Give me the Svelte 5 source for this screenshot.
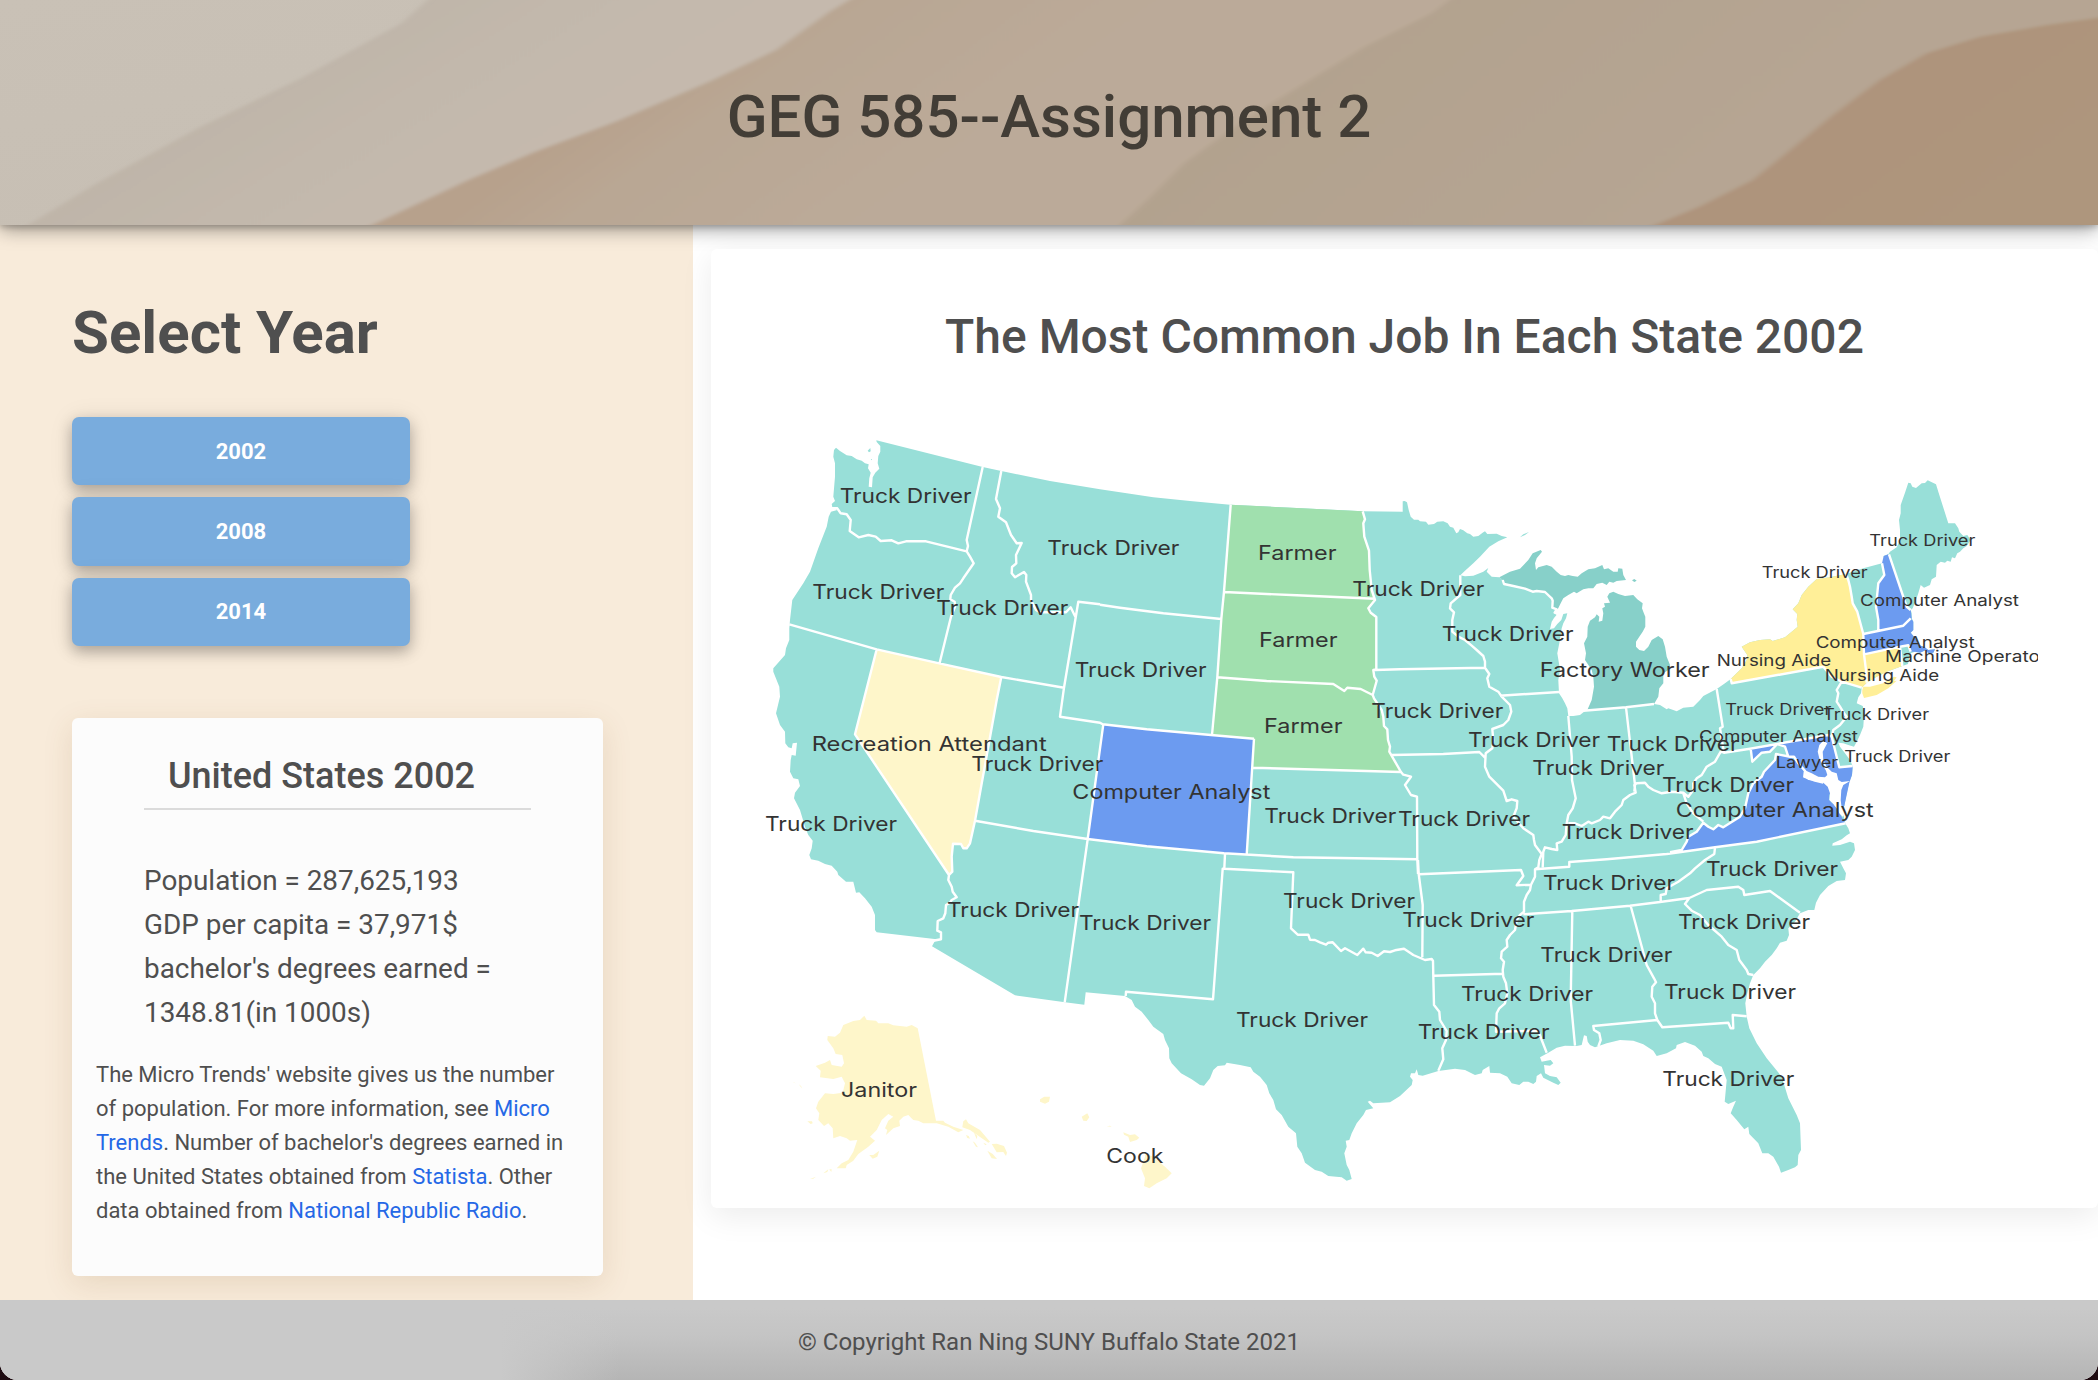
<script>
  // Map geometry is stored per survey sheet: every sheet has an origin on the
  // map and holds points at three units per map pixel.
  const sheets = {
    A: [750, 420], B: [750, 700], C: [1080, 480], D: [1080, 840],
    E: [1350, 480], F: [1670, 460], G: [1400, 780], H: [1690, 600],
  };

  function point(sheet, pair) {
    const [x, y] = pair.split(',').map(Number);
    const [ox, oy] = sheets[sheet];
    return `${(ox + x / 3).toFixed(1)} ${(oy + y / 3).toFixed(1)}`;
  }

  // "A 1,2 3,4 C 5,6" -> SVG path; a letter switches the sheet, "/" lifts the pen.
  function trace(text, closed = false) {
    let sheet = 'A';
    let out = '';
    let pen = 'M';
    for (const token of text.trim().split(/\s+/)) {
      if (token === '/') {
        out += closed ? 'Z' : '';
        pen = 'M';
      } else if (sheets[token]) {
        sheet = token;
      } else {
        out += pen + point(sheet, token);
        pen = 'L';
      }
    }
    return out + (closed ? 'Z' : '');
  }

  const mainland = trace(`A 258,83 270,93 290,106 305,108 320,118 335,122 345,130 356,133 354,145 362,158 358,175 356,200 366,202 368,172 376,158 388,146 383,130 385,108 391,95 391,78 380,66 379,61 698,141 754,153 900,183 1050,208
    C 140,40 220,52 330,63 450,74 650,84 848,94
    E 158,95 158,64 164,63 171,67 176,90 182,110 192,119 205,119 210,124 228,125 235,134 252,132 262,125 280,124 293,130 300,140 310,143 319,160 325,157 330,147 340,151 352,160 360,162 370,170 385,168 400,157 405,154 412,162 440,161 455,168 472,172 445,184 418,200 390,230 370,250 345,272 331,286 345,289 370,287 400,275 415,264 410,275 425,290 448,292 458,300 462,312 490,318 525,326 548,335 560,333 585,336 605,355 608,362 607,383 618,388 614,398 620,404 612,414 605,425 600,447 612,445 622,432 634,420 640,402 652,400 648,415 640,430 635,445 632,465 628,490 622,520 626,545 630,570 625,600 627,640 637,655 645,670 652,685 655,708 670,708 690,705 705,693 720,690 828,682 912,672 930,675 950,688 955,685 980,694 1000,683 1030,680 1050,660
    F 100,708 140,687 165,670 182,657 215,625 230,600 232,585 215,560 240,547 270,540 300,538 308,543 345,532 365,515 383,500 380,480 382,462 368,448 385,430 395,405 415,380 440,357 480,352 528,342 580,325 636,310 643,305 641,288 655,283 660,275 680,262 690,240 690,210 687,180 692,160 692,135 705,98 715,68 722,70 727,80 738,84 755,70 765,69 773,61 798,73 805,95 835,190 855,190 865,205 868,215 880,228 892,225 902,240 890,258 880,265 870,275 862,280 855,295 846,292 842,305 832,302 825,308 812,305 800,315 798,350 785,358 780,375 762,383 752,375 745,400 738,420 728,445 722,450 725,460 725,475 730,485 730,510 722,518 740,540 745,555 762,560 775,570 795,568 790,578 775,580 768,570 750,578 735,575 722,580 718,590 714,612 697,618 650,635 620,650 590,668 575,683 573,700 565,712 560,730 578,738 583,755 580,800 570,825 560,845 552,860 535,855 520,850 505,848 510,860 525,880 540,900 548,918 546,945
    H 478,545 470,580 463,618 455,625 467,672
    G 1345,145 1350,160 1340,166 1325,178 1298,190 1297,197 1320,195 1350,185 1362,190 1365,210 1355,230 1345,240 1320,245 1330,265 1338,280 1335,300 1310,303 1285,318 1260,345 1248,368 1243,390 1225,390 1200,400 1185,425 1165,445 1167,465 1160,482 1140,488 1130,505 1115,525 1095,545 1080,565 1060,585 1050,610 1042,640 1036,670 1040,710 1048,745 1070,790 1100,835 1145,890 1165,955 1190,1005 1200,1030 1203,1110 1195,1125 1193,1155 1185,1162 1165,1170 1143,1178 1137,1160 1120,1130 1105,1120 1087,1120 1075,1090 1048,1062 1045,1040 1033,1048 1010,1020 992,1000 1000,980 1008,962 985,972 974,965 980,900 965,860 945,852 925,835 910,828 905,815 885,797 855,786 830,795 828,805 800,820 770,828 760,812 730,793 700,782 660,780 620,790 585,802 570,795 563,785 560,768 552,766 545,795 530,798 495,797 470,803 445,818 420,832 425,845 440,842 452,840 460,850 450,857 432,855 435,880 450,888 470,892 482,908 475,915 460,908 430,893 423,880 410,888 408,905 400,912 385,905 370,905 358,915 335,910 322,890 300,880 270,878 268,858 248,870 245,880 225,885 195,870 165,866 115,873 68,887 55,885 50,868 45,880 33,880 30,890 38,900 35,915 0,948
    D 930,787 880,790 870,782 863,785 880,805 858,810 850,825 830,850 815,880 808,900 797,902 800,920 793,940 800,975 808,990 815,1017 800,1022 785,1012 745,1008 725,995 705,990 675,968 665,940 652,920 648,880 625,860 605,825 588,808 580,780 568,760 560,735 540,710 520,695 512,682 480,675 440,668 435,676 413,678 400,690 390,715 372,737 360,735 335,718 303,700 275,670 268,655 267,625 255,600 250,582 220,560 205,540 185,515 165,500 155,480 135,468 17,457 13,494
    B 945,907 795,886 546,739 555,722 560,718 380,697 375,690 375,645 365,620 345,595 328,577 318,578 310,545 288,545 265,525 262,515 245,497 225,492 205,482 183,478 178,465 185,445 188,422 175,405 165,380 150,330 132,295 135,278 150,258 145,238 130,235 120,215 122,180 125,165 137,167 141,128 128,130 125,145 115,142 106,130 105,95 90,75 78,40 80,0
    A 78,880 90,830 88,800 70,755 70,745 105,705 108,685 118,660 118,625 120,600 127,540 160,490 180,455 205,385 230,320 236,290 243,275 262,270 247,262 245,252 255,243 250,230 255,170 255,130 250,110 252,90`, true);

  const virginia = `-60,757 -25,750 -10,725 -5,710 20,695 40,668 55,680 70,688 85,675 100,682 150,650 165,625 175,580 190,550 215,530 222,515 255,480 258,462 300,470 325,490 345,520 400,548 418,580 418,600 440,625 467,672 300,705 200,725 75,742`;
  const maryland = `182,446 415,405 428,418 448,502 488,498 486,525 478,548 463,618 430,615 418,580 400,548 343,530 345,512 325,490 312,470 295,470 285,440 262,432 240,455 215,458 187,485`;

  const regions = [
    ['michigan', `E 448,292 480,275 510,266 535,240 548,220 572,210 576,215 560,235 555,250 558,270 565,262 590,255 605,260 620,275 632,285 645,288 655,285 668,288 683,290 695,280 715,268 735,265 757,255 762,268 775,265 790,275 803,275 805,265 817,266 820,285 828,300 800,303 790,308 778,305 770,315 757,308 740,312 730,325 715,325 700,328 680,340 672,335 655,345 640,355 632,370 623,388 607,383 608,362 605,355 585,336 560,333 548,335 525,326 490,318 462,312 458,300 /
      712,690 725,660 732,620 730,590 725,570 705,540 708,520 702,490 712,470 713,440 720,422 735,412 740,403 748,410 746,425 757,422 760,400 757,385 765,380 762,370 780,368 772,350 778,340 790,335 805,342 825,348 850,345 862,358 878,370 876,385 880,395 886,410 886,440 878,455 868,470 858,485 858,500 868,510 882,513 895,500 905,480 925,468 938,478 945,500 950,530 960,555 955,570 940,580 940,610 928,625 925,650 912,672 835,684 / 846,301 853,297 860,302 853,306`],
    ['farmer', `C 452,74 650,84 848,94 855,118 850,130 853,170 867,212 869,270 875,330 885,360 865,385 872,398 889,411 889,568 880,570 883,590 890,602 878,645 882,655 905,690 910,710 912,738 922,748 924,780 930,800 928,815 963,876 520,863 522,776 396,765 412,592 424,417 432,335`],
    ['pale', `A 380,688 568,730 754,771 B 740,0 675,362 660,430 650,445 640,445 633,432 609,431 605,470 607,515 597,525 315,103 340,0`],
    ['analyst', `C 70,733 200,748 393,765 522,776 500,1124 432,1120 200,1099 23,1077`],
    ['nursing', `F 182,657 215,625 230,600 232,585 215,560 240,547 270,540 300,538 308,543 345,532 365,515 383,500 380,480 382,462 368,448 385,430 395,405 415,380 440,357 480,352 528,342 535,360 540,380 545,410 548,430 562,455 580,522 582,583 588,630 590,668 577,682 515,665 485,650 460,620 185,670 /
      582,583 690,560 697,618 650,635 620,650 590,668 588,630`],
    ['analyst', `F 655,283 698,405 710,440 722,450 725,475 700,497 625,510 625,480 618,440 622,400 625,370 643,345 636,310 641,288 /
      580,522 700,497 725,477 730,485 730,510 722,518 740,540 745,555 762,560 775,570 795,568 790,578 775,580 768,570 750,578 735,575 722,575 715,556 690,560 582,583`],
    ['analyst', `H ${virginia} / ${maryland}`],
  ].map(([kind, text]) => ({ kind, d: trace(text, true) }));

  const chesapeake = trace(`H 400,422 388,435 383,455 388,475 398,495 408,512 412,525 405,532 385,530 365,520 348,512 343,530 355,540 375,542 400,548 413,560 420,580 418,600 428,610 440,625 448,640 458,650 465,640 455,625 452,600 454,570 460,555 480,543 455,546 445,540 440,520 425,515 410,500 400,480 398,455 412,430`, true);
  const longIsland = trace(`F 577,690 580,680 600,680 640,670 672,650 680,652 672,663 680,662 655,685 620,705 582,714 577,700`, true);
  const smallIsles = trace(`E 510,172 520,163 537,156 525,165 / A 353,92 361,84 362,94 357,97 / 362,118 366,117 366,121`, true);

  const borders = trace(`A 243,265 262,265 272,280 290,283 302,300 299,333 326,352 355,345 377,350 392,363 425,361 445,370 468,364 528,364 650,394 /
    698,141 650,360 654,378 650,394 660,410 671,430 640,475 630,490 615,503 602,525 601,538 614,545 615,560 603,590 569,728 /
    118,613 380,688 568,730 754,771 942,803 /
    754,153 738,237 750,265 745,290 768,307 783,345 800,370 815,369 798,405 799,430 786,441 785,460 795,472 822,456 829,465 828,485 843,525 843,540 858,570 870,577 948,577 962,562 976,590 /
    1050,553 985,545 942,803 930,890 B 1050,68 C 68,733 200,748 393,765 522,776 /
    C 60,374 120,383 250,400 424,417 /
    A 380,688 B 315,103 597,525 / A 754,771 B 740,0 675,362 660,430 650,445 640,445 633,432 609,431 605,470 607,515 597,525 /
    597,525 595,540 605,560 608,575 620,592 605,600 600,608 588,615 586,640 580,655 563,663 562,692 573,697 573,718 550,722 /
    675,362 850,393 1013,417 944,907 / C 70,733 23,1077 /
    C 452,74 432,335 424,417 412,592 396,765 / 432,336 650,346 885,356 / 412,592 560,603 760,612 793,633 802,623 842,627 878,645 /
    848,94 855,118 850,130 853,170 867,212 869,270 875,330 885,360 865,385 872,398 889,411 889,568 880,570 883,590 890,602 878,645 882,655 905,690 910,710 912,738 922,748 924,780 930,800 928,815 963,876 970,884 993,890 975,915 993,945 1011,950 1012,1138 1014,1182 /
    520,863 963,876 / 522,776 500,1124 / 23,1077 200,1099 432,1120 640,1132 1012,1138 /
    D 435,42 433,86 428,86 399,478 138,455 137,468 / 433,86 640,97 633,265 653,284 685,284 690,299 705,300 720,307 738,314 745,308 758,307 783,333 795,325 832,345 850,326 857,337 875,338 893,348 912,334 930,336 945,331 972,326 990,338 1000,345 1035,360 1055,357 1059,363 1060,408 1062,495 1078,515 1080,540 1100,573 1098,600 1087,625 1090,658 1075,692 /
    1014,60 1016,102 1028,195 1027,352 / G 57,283 363,270 370,288 350,316 393,314 / 102,587 310,581 /
    E 75,570 150,568 405,563 / 331,286 331,345 302,370 300,385 312,397 307,420 307,455 325,470 345,480 365,497 380,510 400,528 405,545 405,563 418,582 412,595 418,620 445,635 455,650 480,675 484,695 475,720 460,735 427,747 430,780 427,805 407,820 405,860 418,890 460,932 470,963 485,958 502,963 500,985 490,1010 520,1045 550,1065
    G 402,180 405,195 425,222 418,240 415,262 405,268 405,290 393,314 390,330 380,345 372,365 372,395 360,405 350,420 345,450 330,465 320,480 322,500 305,515 303,535 312,545 308,570 310,590 318,610 322,640 315,670 298,685 290,700 288,755 415,752 425,780 440,818 /
    E 125,825 280,822 388,816 405,833 / 450,647 627,636 /
    458,300 462,312 490,318 525,326 548,335 560,333 585,336 605,355 608,362 607,383 620,388 614,398 625,402 /
    655,708 665,830 666,900 677,955 668,985 655,1005 650,1030 G 500,130 497,165 485,185 470,190 472,210 455,207 435,202 430,215 428,262 /
    505,130 525,130 545,138 565,125 575,130 600,120 610,110 630,115 645,95 665,75 670,60 690,45 707,38 703,15 710,10 735,8 745,20 760,30 785,40 815,35 850,38 865,50 880,30 880,10
    F 80,955 95,945 110,920 135,905 152,875 162,878 / G 850,40 860,70 880,100 910,125 /
    E 828,682 855,915 853,935 / E 700,692 828,682 912,672 /
    F 140,687 158,800 150,805 162,878 240,866 475,825 485,830 508,922 548,918 /
    182,657 185,670 460,620 485,650 515,665 575,683 / 515,665 500,690 505,700 500,725 510,740 522,760 530,770 510,795 490,810 485,830 /
    528,342 535,360 540,380 545,410 548,430 562,455 580,522 582,583 588,630 590,668 / 636,310 643,345 625,370 622,400 618,440 625,480 625,510 /
    657,283 698,405 710,440 722,450 / 580,522 700,497 722,475 / 582,583 690,560 715,556 722,575 / 690,560 697,618 /
    G 405,268 508,260 508,246 620,238 800,222 945,202 1070,185 1337,130 / 370,403 515,393 690,377 780,366 868,354 /
    945,202 943,222 915,240 885,265 870,280 835,305 800,325 797,342 782,345 782,366 /
    868,354 920,330 1015,320 1030,330 1033,345 1110,333 1200,398 / 868,354 855,372 875,392 900,405 925,435 965,470 985,495 1010,510 1018,540 1040,570 1045,582 1060,585 /
    517,395 512,660 525,797 / 692,378 740,555 762,595 768,607 757,620 755,650 765,670 765,700 772,720 787,742 985,728 992,745 1000,745 998,705 1040,709 / 772,720 580,738 582,750 598,760 602,780 595,800 /
    H -60,757 -25,750 -10,725 -5,710 20,695 40,668 55,680 70,688 85,675 100,682 150,650 165,625 175,580 190,550 215,530 222,515 255,480 258,462 300,470 /
    182,446 187,485 215,458 240,455 262,432 285,440 295,470 312,470 325,490 345,512 343,530 375,542 400,548`);

  const alaska = trace(`B 343,947 350,960 378,962 385,970 415,970 430,976 470,980 485,975 503,985 558,1262 580,1262 585,1268 610,1280 640,1290 625,1297 595,1280 560,1270 520,1270 505,1262 490,1260 475,1245 460,1250 448,1262 450,1278 430,1285 408,1305 412,1290 405,1285 415,1262 430,1250 415,1242 395,1260 380,1290 360,1310 375,1322 355,1340 325,1362 310,1382 290,1395 287,1405 260,1405 275,1390 295,1380 310,1355 322,1320 300,1322 290,1315 270,1308 250,1315 248,1285 235,1270 222,1278 205,1260 208,1240 198,1225 205,1205 225,1180 250,1182 278,1178 285,1150 275,1130 250,1137 210,1132 212,1112 197,1098 225,1088 240,1080 245,1095 275,1100 282,1090 277,1065 257,1062 250,1045 232,1020 233,1008 255,1010 270,998 280,975 310,963 330,960 /
    358,1365 370,1365 388,1352 382,1370 368,1376 / 637,1282 640,1264 648,1258 655,1270 690,1290 720,1325 715,1328 660,1290 / 725,1332 740,1331 762,1338 771,1358 768,1368 760,1356 740,1357 / 712,1352 728,1362 741,1377 725,1375 / 668,1324 675,1328 684,1342 678,1340 / 648,1305 656,1308 660,1316 652,1314 / 672,1298 682,1308 680,1318 / 700,1328 710,1333 706,1336 / 220,1420 235,1408 232,1416 / 238,1408 245,1408 244,1416 / 180,1437 198,1430 190,1436 / 172,1264 186,1264 188,1270 182,1272 / 146,1153 153,1158 157,1166 / 130,1147 138,1150 131,1148`, true);
  const hawaii = trace(`B 870,1198 883,1190 900,1190 897,1205 885,1211 870,1205 / 995,1250 1012,1240 1018,1252 1010,1263 1000,1262 / D 130,877 150,885 165,883 178,893 170,900 150,906 145,890 132,884 / 80,859 90,857 95,860 / 183,985 195,950 195,942 215,948 240,968 255,980 275,1000 260,1015 230,1030 208,1045 192,1038 195,1015`, true);

  // Rendered text widths in map pixels: [large, small]
  const widths = {
    'Truck Driver': [132, 106], 'Computer Analyst': [198, 159], Farmer: [78.5],
    'Recreation Attendant': [235], 'Factory Worker': [170], Janitor: [76], Cook: [57],
    'Nursing Aide': [0, 114.5], Lawyer: [0, 62.5], 'Machine Operator': [0, 162],
  };
  const T = 'Truck Driver';
  const C = 'Computer Analyst';
  const placed = [
    [T, 'A', 272, 248], [T, 'A', 190, 538], [T, 'A', 562, 585], [T, 'A', 895, 405], [T, 'C', -13, 592],
    ['Recreation Attendant', 'B', 188, 152], [T, 'B', 667, 214], [T, 'B', 48, 392], [T, 'B', 594, 651], ['Janitor', 'B', 276, 1190],
    ['Farmer', 'C', 537, 239], ['Farmer', 'C', 540, 502], ['Farmer', 'C', 555, 759], [C, 'C', -20, 956], [T, 'C', 556, 1029],
    [T, 'C', 820, 349], [T, 'E', 67, 713], [T, 'E', 278, 484], ['Factory Worker', 'E', 572, 590], [T, 'E', 357, 801],
    [T, 'E', 550, 886], [T, 'E', 773, 814], [T, 'E', 147, 1038], [T, 'G', 488, 176], [T, 'D', 0, 270],
    [T, 'D', 612, 205], [T, 'D', 970, 261], [T, 'D', 471, 560], [T, 'D', 1016, 598], ['Cook', 'D', 82, 969],
    [T, 'G', 432, 329], [T, 'G', 921, 288], [T, 'G', 837, 447], [T, 'G', 424, 547], [T, 'G', 795, 656],
    [T, 'G', 186, 662], [T, 'G', 790, 918], [C, 'G', 830, 110], [T, 'H', -81, 575],
    [T, 'F', 601, 258, 1], [T, 'F', 278, 354, 1], [C, 'F', 573, 438, 1], [C, 'F', 440, 563, 1],
    ['Machine Operator', 'F', 648, 606, 1], ['Nursing Aide', 'F', 143, 617, 1], ['Nursing Aide', 'F', 467, 663, 1],
    [T, 'F', 169, 766, 1], [T, 'F', 462, 780, 1], [C, 'F', 90, 845, 1], ['Lawyer', 'F', 320, 925, 1], [T, 'F', 526, 906, 1],
  ];
  const labels = placed.map(([text, sheet, x, y, small = 0]) => ({
    text,
    small: small === 1,
    x: sheets[sheet][0] + x / 3 - 1,
    y: sheets[sheet][1] + y / 3,
    width: widths[text][small],
  }));

  const years = [2002, 2008, 2014];
</script>

<div class="page">
  <header>
    <svg class="dunes" viewBox="0 0 1568 675" preserveAspectRatio="none" aria-hidden="true">
      <defs>
        <linearGradient id="d1" x1="0" y1="0" x2="1" y2="0.6">
          <stop offset="0" stop-color="#c9c1b6" /><stop offset="1" stop-color="#c5bdb2" />
        </linearGradient>
        <linearGradient id="d2" gradientUnits="userSpaceOnUse" x1="180" y1="300" x2="430" y2="400">
          <stop offset="0" stop-color="#bfb5a9" /><stop offset="0.45" stop-color="#c2b8ac" /><stop offset="1" stop-color="#c5b9ad" />
        </linearGradient>
        <linearGradient id="d3" gradientUnits="userSpaceOnUse" x1="430" y1="380" x2="720" y2="480">
          <stop offset="0" stop-color="#b7a18c" /><stop offset="0.3" stop-color="#b9a794" /><stop offset="1" stop-color="#bbaa99" />
        </linearGradient>
        <linearGradient id="d4" gradientUnits="userSpaceOnUse" x1="920" y1="300" x2="1320" y2="420">
          <stop offset="0" stop-color="#b2a28e" /><stop offset="1" stop-color="#b6a593" />
        </linearGradient>
        <linearGradient id="d5" gradientUnits="userSpaceOnUse" x1="1340" y1="350" x2="1568" y2="430">
          <stop offset="0" stop-color="#ae937b" /><stop offset="1" stop-color="#ae967d" />
        </linearGradient>
        <filter id="soft" x="-5%" y="-5%" width="110%" height="110%"><feGaussianBlur stdDeviation="2.2 5" /></filter>
      </defs>
      <rect width="1568" height="675" fill="url(#d1)" />
      <g filter="url(#soft)">
        <path fill="url(#d2)" d="M325-20 300 70 225 235 150 380 70 555 15 690H700V-20Z" />
        <path fill="url(#d3)" d="M643-20 620 35 580 150 530 245 460 365 400 455 350 540 270 690H1200V-20Z" />
        <path fill="url(#d4)" d="M1090-20 1070 40 1020 140 975 250 930 360 885 490 860 590 833 690H1600V-20Z" />
        <path fill="url(#d5)" d="M1600 35 1530 75 1480 110 1440 160 1405 240 1370 345 1335 460 1310 540 1270 620 1228 690H1600Z" />
      </g>
    </svg>
    <h1>GEG 585--Assignment 2</h1>
  </header>

  <main>
    <aside>
      <h2>Select Year</h2>
      <div class="years">
        {#each years as year}
          <button type="button">{year}</button>
        {/each}
      </div>
      <section class="facts">
        <h3>United States 2002</h3>
        <ul>
          <li>Population = 287,625,193</li>
          <li>GDP per capita = 37,971$</li>
          <li>bachelor's degrees earned =<br />1348.81(in 1000s)</li>
        </ul>
        <p>
          The Micro Trends' website gives us the number<br />
          of population. For more information, see <a href="#micro">Micro<br />
          Trends</a>. Number of bachelor's degrees earned in<br />
          the United States obtained from <a href="#statista">Statista</a>. Other<br />
          data obtained from <a href="#radio">National Republic Radio</a>.
        </p>
      </section>
    </aside>

    <section class="map-card">
      <h2>The Most Common Job In Each State 2002</h2>
      <svg class="map" viewBox="750 420 1288 780" role="img" aria-label="Most common job in each state, 2002">
        <path class="common" d={mainland} />
        <path class="common" d={smallIsles} />
        {#each regions as region}
          <path class={region.kind} d={region.d} />
        {/each}
        <path class="nursing" d={longIsland} />
        <path class="pale" d={alaska} />
        <path class="pale" d={hawaii} />
        <path class="border" d={borders} />
        <path class="water" d={chesapeake} />
        {#each labels as label}
          <text class:small={label.small} x={label.x} y={label.y} textLength={label.width} lengthAdjust="spacingAndGlyphs">{label.text}</text>
        {/each}
      </svg>
    </section>
  </main>

  <footer>© Copyright Ran Ning SUNY Buffalo State 2021</footer>
</div>

<style>
  :global(html), :global(body) { margin: 0; background: #1d0a10; }
  .page {
    display: flex;
    flex-direction: column;
    height: 1380px;
    overflow: hidden;
    font-family: Roboto, "Liberation Sans", sans-serif;
    color: #4f4f4f;
    border-bottom-left-radius: 18px;
    border-bottom-right-radius: 18px;
    background: #fff;
  }
  h1, h2, h3, p, ul { margin: 0; padding: 0; }

  header {
    display: grid;
    flex: none;
    height: 225px;
    box-shadow: 0 4px 18px rgba(0, 0, 0, 0.4), 0 2px 6px rgba(0, 0, 0, 0.2);
    z-index: 1;
  }
  header > * { grid-area: 1 / 1; }
  .dunes { width: 100%; height: 225px; display: block; }
  h1 {
    z-index: 1;
    padding-top: 82px;
    text-align: center;
    font-size: 60px;
    line-height: 70px;
    font-weight: 500;
    color: #423d36;
  }

  main { display: flex; flex: none; height: 1075px; }
  aside {
    box-sizing: border-box;
    flex: none;
    width: 693px;
    padding: 73px 0 0 72px;
    background: #f8ebda;
  }
  aside h2 { font-size: 60px; line-height: 70px; font-weight: 700; }
  .years { display: flex; flex-direction: column; gap: 12px; width: 338px; margin-top: 49px; }
  button {
    height: 68.3px;
    border: 0;
    border-radius: 7px;
    background: #79acdd;
    color: #fff;
    font: 700 22px Roboto, "Liberation Sans", sans-serif;
    box-shadow: 0 6px 14px rgba(0, 0, 0, 0.25), 0 2px 24px rgba(0, 0, 0, 0.1);
  }
  .facts {
    box-sizing: border-box;
    width: 531px;
    height: 558px;
    margin-top: 72px;
    padding: 35px 24px 0;
    border-radius: 6px;
    background: #fcfcfc;
    box-shadow: 0 8px 30px rgba(120, 80, 20, 0.13);
  }
  h3 {
    margin: 0 48px;
    padding: 0 24px 8px;
    border-bottom: 2px solid #dbdbdb;
    font-size: 36px;
    line-height: 47px;
    font-weight: 500;
    white-space: nowrap;
  }
  ul { margin: 49px 48px 0; list-style: none; font-size: 27.9px; line-height: 44px; white-space: nowrap; }
  p { margin-top: 23.5px; font-size: 22px; line-height: 34px; white-space: nowrap; }
  a { color: #2568e6; text-decoration: none; }

  .map-card {
    flex: 1;
    height: 959px;
    margin: 24px 0 0 18px;
    border-radius: 6px;
    background: #fff;
    box-shadow: 0 8px 32px rgba(0, 0, 0, 0.08);
    z-index: 2;
  }
  .map-card h2 {
    padding: 60px 0 0;
    text-align: center;
    font-size: 48px;
    line-height: 56px;
    font-weight: 500;
  }
  .map { display: block; width: 1288px; height: 780px; margin: 55px 0 0 39px; overflow: hidden; }
  .common { fill: #98dfd8; }
  .michigan { fill: #87d0c9; }
  .farmer { fill: #a0e0ae; }
  .pale { fill: #fef6ca; }
  .nursing { fill: #ffef98; }
  .analyst { fill: #6c9bf0; }
  .water { fill: #fff; }
  .border { fill: none; stroke: #fff; stroke-width: 2.4; stroke-linejoin: round; }
  text { font: 400 20px Inter, "Liberation Sans", sans-serif; fill: #333; }
  text.small { font-size: 16px; }

  footer {
    flex: none;
    height: 80px;
    line-height: 84px;
    text-align: center;
    font-size: 24px;
    background:
      linear-gradient(to right, #c9c9c9 500px, rgba(201, 201, 201, 0) 620px),
      linear-gradient(to bottom, #c9c9c9 10%, #c4c4c4 45%, #b5b5b5 100%);
    z-index: 2;
  }
</style>
